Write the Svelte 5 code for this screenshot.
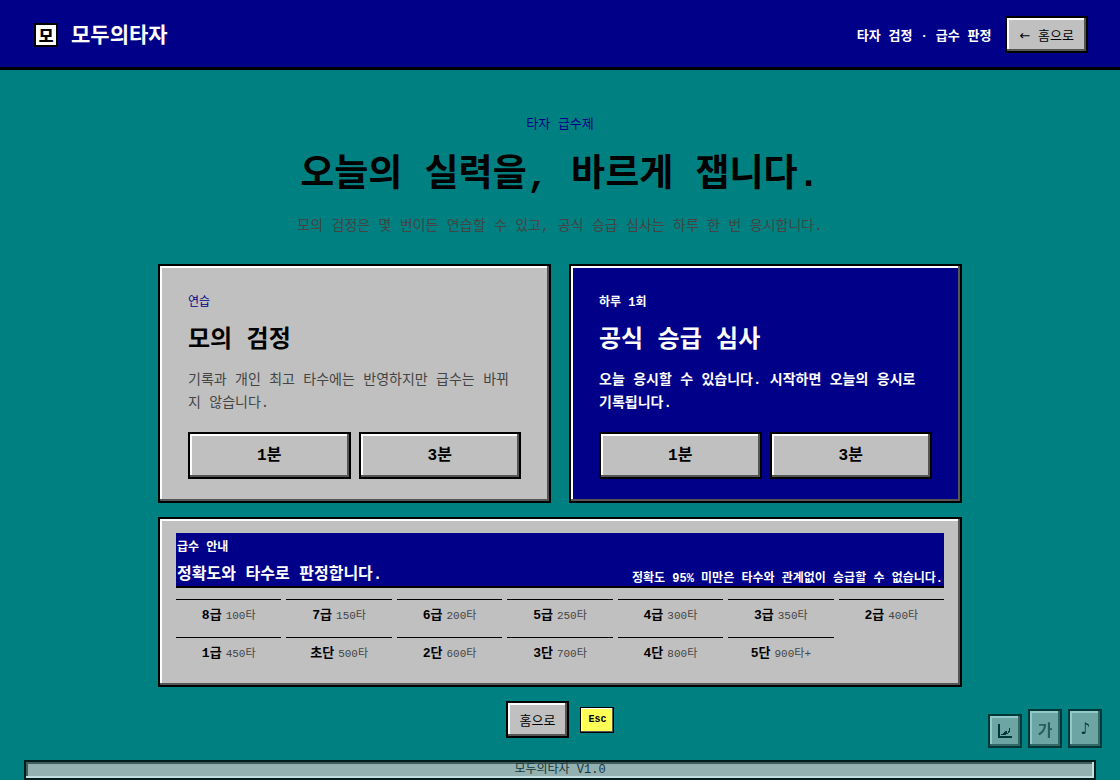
<script>
	const MINUTES = [1, 3];

	const exams = [
		{
			label: "연습",
			title: "모의 검정",
			text: "기록과 개인 최고 타수에는 반영하지만 급수는 바뀌지 않습니다.",
			official: false
		},
		{
			label: "하루 1회",
			title: "공식 승급 심사",
			text: "오늘 응시할 수 있습니다. 시작하면 오늘의 응시로 기록됩니다.",
			official: true
		}
	];

	const grades = [
		["8급", "100타"],
		["7급", "150타"],
		["6급", "200타"],
		["5급", "250타"],
		["4급", "300타"],
		["3급", "350타"],
		["2급", "400타"],
		["1급", "450타"],
		["초단", "500타"],
		["2단", "600타"],
		["3단", "700타"],
		["4단", "800타"],
		["5단", "900타+"]
	];
</script>

<div class="page">
	<header>
		<a class="brand" href="#home">
			<span class="logo">모</span>
			<span class="name">모두의타자</span>
		</a>
		<div class="top">
			<span>타자 검정 · 급수 판정</span>
			<button class="raised small"><span class="arrow">←</span> 홈으로</button>
		</div>
	</header>

	<main>
		<section class="hero">
			<p class="label">타자 급수제</p>
			<h1>오늘의 실력을, 바르게 잽니다.</h1>
			<p class="lead">모의 검정은 몇 번이든 연습할 수 있고, 공식 승급 심사는 하루 한 번 응시합니다.</p>
		</section>

		<div class="exams">
			{#each exams as exam}
				<section class="exam raised" class:official={exam.official}>
					<p class="label">{exam.label}</p>
					<h2>{exam.title}</h2>
					<p class="text">{exam.text}</p>
					<div class="choices">
						{#each MINUTES as minute}
							<button class="raised choice">{minute}분</button>
						{/each}
					</div>
				</section>
			{/each}
		</div>

		<section class="guide raised">
			<div class="guide-head">
				<div>
					<p class="label">급수 안내</p>
					<h3>정확도와 타수로 판정합니다.</h3>
				</div>
				<p class="note">정확도 95% 미만은 타수와 관계없이 승급할 수 없습니다.</p>
			</div>
			<ul>
				{#each grades as [grade, speed]}
					<li><strong>{grade}</strong><span>{speed}</span></li>
				{/each}
			</ul>
		</section>

		<div class="actions">
			<button class="raised small">홈으로</button>
			<kbd>Esc</kbd>
		</div>
	</main>

	<footer>모두의타자 V1.0</footer>

	<div class="tools">
		<button class="raised chart" aria-label="통계">
			<svg width="14" height="14" viewBox="0 0 14 14" shape-rendering="crispEdges">
				<path d="M0 0h2v12h12v2H0z" />
				<path d="M3 10h2V9h1V8h1V7h2v2h1V7h1V4h1v4h-1v1h-1v1H8v1H3z" />
			</svg>
		</button>
		<button class="raised" aria-label="글꼴">가</button>
		<button class="raised note-icon" aria-label="소리">♪</button>
	</div>
</div>

<style>
	:global(body) {
		margin: 0;
		background: #008080;
	}
	.page {
		--navy: #000088;
		--silver: #c0c0c0;
		--shade: #555555;

		display: flex;
		flex-direction: column;
		min-height: 100vh;
		color: #000000;
		font-family: "Liberation Mono", "Noto Sans CJK KR", monospace;
	}
	p, h1, h2, h3, ul {
		margin: 0;
		padding: 0;
	}
	button {
		box-sizing: border-box;
		padding: 0;
		color: inherit;
		font-family: inherit;
		cursor: pointer;
	}
	.raised {
		border: 2px solid #000000;
		border-radius: 0;
		background: var(--silver);
		box-shadow: inset -2px -2px var(--shade), inset 2px 2px #ffffff;
	}
	.small {
		height: 37px;
		padding: 0 12px;
		color: #000000;
		font-size: 13px;
	}
	.arrow {
		font-family: "DejaVu Sans", sans-serif;
	}

	header {
		display: flex;
		align-items: center;
		justify-content: space-between;
		box-sizing: border-box;
		height: 70px;
		padding: 2px 32px 0 34px;
		border-bottom: 3px solid #000000;
		background: var(--navy);
		color: #ffffff;
		font-weight: bold;
	}
	.brand {
		display: flex;
		align-items: center;
		gap: 13px;
		color: inherit;
		font-size: 21px;
		text-decoration: none;
	}
	.name {
		padding-bottom: 4px;
	}
	.logo {
		box-sizing: border-box;
		width: 24px;
		height: 24px;
		border: 2px solid #000000;
		background: #ffffff;
		color: #000000;
		font-family: "Noto Sans CJK KR", sans-serif;
		font-size: 16px;
		font-weight: 900;
		line-height: 20px;
		text-align: center;
	}
	.top {
		display: flex;
		align-items: center;
		gap: 14px;
		font-size: 13px;
	}

	main {
		flex: 1;
		box-sizing: border-box;
		width: 100%;
		max-width: 804px;
		margin: 0 auto;
		padding: 47px 0 22px;
	}
	.hero {
		padding-bottom: 26px;
		text-align: center;
	}
	.hero .label {
		color: var(--navy);
		font-size: 13px;
		line-height: 16px;
	}
	h1 {
		margin: 19px 0 14px;
		font-size: 37px;
		line-height: 48px;
	}
	.lead {
		color: #444444;
		font-size: 14px;
		line-height: 24px;
	}

	.exams {
		display: grid;
		grid-template-columns: 1fr 1fr;
		gap: 18px;
	}
	.exam {
		padding: 30px 28px 22px;
	}
	.exam .label {
		color: var(--navy);
		font-size: 12px;
		line-height: 14px;
	}
	h2 {
		margin: 15px 0 12px;
		font-size: 24px;
		line-height: 32px;
	}
	.text {
		color: #444444;
		font-size: 14px;
		line-height: 23px;
	}
	.official {
		background: var(--navy);
		color: #ffffff;
	}
	.official .label,
	.official .text {
		color: #ffffff;
		font-weight: bold;
	}
	.choices {
		display: grid;
		grid-template-columns: 1fr 1fr;
		gap: 8px;
		margin-top: 17px;
	}
	.choice {
		height: 47px;
		padding-bottom: 5px;
		color: #000000;
		font-size: 16px;
		font-weight: bold;
	}

	.guide {
		margin-top: 14px;
		padding: 14px 16px 15px;
	}
	.guide-head {
		display: flex;
		align-items: flex-end;
		justify-content: space-between;
		padding: 0 1px;
		border-bottom: 2px solid #000000;
		background: var(--navy);
		color: #ffffff;
		font-weight: bold;
	}
	.guide .label {
		font-size: 12px;
		line-height: 31px;
	}
	h3 {
		font-size: 16px;
		line-height: 22px;
	}
	.note {
		font-size: 12px;
		line-height: 14px;
	}
	ul {
		display: grid;
		grid-template-columns: repeat(7, 1fr);
		gap: 5px;
		margin-top: 11px;
		list-style: none;
	}
	li {
		display: flex;
		align-items: center;
		justify-content: center;
		gap: 4px;
		height: 27px;
		padding-bottom: 5px;
		border-top: 1px solid #000000;
		font-size: 13px;
	}
	li span {
		color: #444444;
		font-size: 11px;
	}

	.actions {
		display: flex;
		align-items: center;
		justify-content: center;
		gap: 11px;
		margin-top: 14px;
	}
	kbd {
		padding: 0 7px;
		border: 1px solid #000000;
		background: #ffff55;
		box-shadow: inset -1px -1px var(--shade), inset 1px 1px #ffffff;
		font-family: inherit;
		font-size: 10px;
		font-weight: bold;
		line-height: 24px;
	}

	footer {
		margin: 0 24px;
		border: 2px solid #000000;
		background: var(--silver);
		box-shadow: inset -2px -2px #ffffff, inset 2px 2px var(--shade);
		color: #222222;
		font-size: 12px;
		line-height: 16px;
		text-align: center;
		opacity: 0.77;
	}

	.tools {
		position: fixed;
		right: 18px;
		bottom: 32px;
		display: flex;
		align-items: flex-end;
		gap: 6px;
		opacity: 0.57;
	}
	.tools button {
		display: flex;
		align-items: center;
		justify-content: center;
		width: 34px;
		height: 39px;
		color: #444444;
		font-size: 16px;
		font-weight: bold;
	}
	.tools .chart {
		height: 34px;
	}
	.tools .note-icon {
		color: #000000;
		font-family: "DejaVu Sans", sans-serif;
		font-weight: normal;
	}
</style>
